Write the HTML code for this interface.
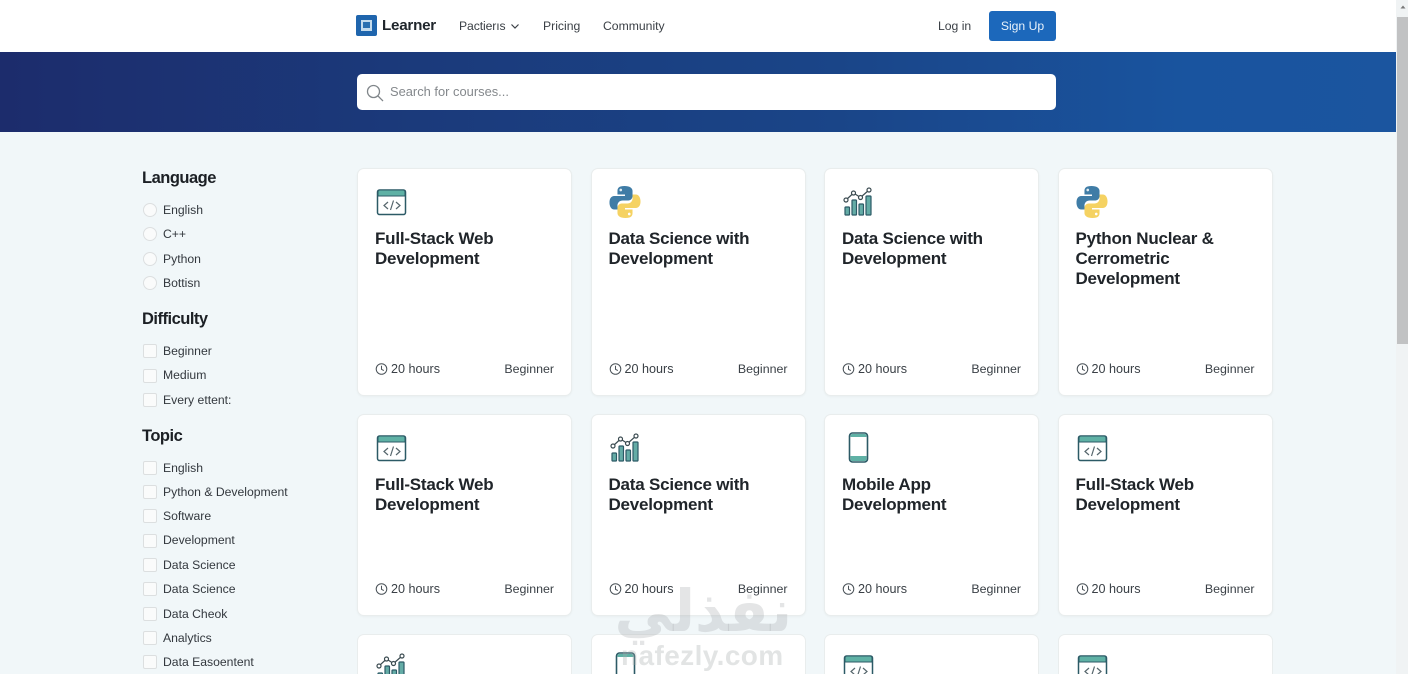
<!DOCTYPE html>
<html style="width:1408px;height:674px;overflow:hidden"><head><meta charset="utf-8"><style>
html,body{margin:0;padding:0}
body{width:1408px;height:674px;overflow:hidden;background:#f1f7f9;font-family:"Liberation Sans",sans-serif;color:#2a3036}
#w{position:relative;width:1408px;height:674px;overflow:hidden;background:#f1f7f9}
.a{position:absolute;white-space:nowrap}
.top{left:0;top:0;width:1396px;height:52px;background:#fff}
.hero{left:0;top:52px;width:1396px;height:80px;background:linear-gradient(90deg,#1c2c6c 0%,#1b3a7b 30%,#1a4588 60%,#19549f 85%,#1b559f 100%)}
.nav{font-size:12.2px;color:#3b4046;top:18px;line-height:17px}
.search{left:357px;top:74px;width:699px;height:36px;background:#fff;border-radius:5px}
.sb{left:1396px;top:0;width:12px;height:674px;background:#f0f3f4}
.th{left:1397px;top:17px;width:11px;height:327px;background:#c1c2c3}
h3{position:absolute;margin:0;left:142px;font-size:16.5px;font-weight:700;letter-spacing:-.5px;color:#1c2025;line-height:22px}
.l{position:absolute;left:163px;font-size:12.2px;color:#33383e;line-height:16px;white-space:nowrap}
.r,.c{position:absolute;left:143px;width:12px;height:12px;background:#fafbfb;border:1px solid #dcdfe0}
.r{border-radius:50%}.c{border-radius:2px}
.card{position:absolute;width:215px;background:#fff;border:1px solid #e9eded;border-radius:7px;box-sizing:border-box;box-shadow:0 1px 2px rgba(0,0,0,.04)}
.last{height:40px;top:634px;border-bottom:0;border-radius:7px 7px 0 0;box-shadow:none;overflow:hidden}
.t{position:absolute;left:17px;top:60px;font-size:17px;font-weight:700;color:#20252a;line-height:20px;letter-spacing:-.22px;white-space:nowrap}
.h{position:absolute;left:33px;font-size:12.6px;color:#3a4046;line-height:17px;white-space:nowrap}
.b{position:absolute;right:17px;font-size:12.4px;color:#3a4046;line-height:17px}
.k{position:absolute;left:17px;width:13px;height:14px}
.i{position:absolute;width:34px;height:34px;left:17px;top:16px}
.p{width:32px}
</style></head><body><div id="w">
<svg width="0" height="0" style="position:absolute">
<defs>
<symbol id="code" viewBox="0 0 34 34"><rect x="2.5" y="5" width="28" height="24.5" rx="2" fill="#fff" stroke="#2c5a66" stroke-width="1.5"/><path d="M3 7a2 2 0 0 1 2-2h23a2 2 0 0 1 2 2v4H3z" fill="#5fb1a5" stroke="#2c5a66" stroke-width="1"/><path d="M13 17l-4 3.500 4 3.500M21 17l4 3.500-4 3.500M18.500 15.500l-3 9.500" fill="none" stroke="#56666c" stroke-width="1.200"/></symbol>
<symbol id="py" viewBox="0 0 34 34"><path d="M16.500 1c-6 0-7.500 2-7.500 5v3.500h8V11H5.500C2.500 11 .5 13.500.5 17.500S2.500 24.500 5.500 24.500H9v-4c0-3 2.500-5 5.500-5h6c2.500 0 4.500-2 4.500-4.500V6c0-3-3-5-8.500-5z" fill="#3f7ca6"/><path d="M17.500 33c6 0 7.500-2 7.500-5v-3.500h-8V23h11.500c3 0 5-2.500 5-6.500S31.500 9.500 28.500 9.500H25v4c0 3-2.500 5-5.500 5h-6C11 18.500 9 20.500 9 23v5c0 3 3 5 8.500 5z" fill="#f5d262"/><circle cx="12.500" cy="5" r="1.400" fill="#dfeaf0"/><circle cx="21.500" cy="29" r="1.400" fill="#fff"/></symbol>
<symbol id="chart" viewBox="0 0 34 34"><g fill="#64aca6" stroke="#2c5a66" stroke-width="1.200"><rect x="3" y="22" width="4.500" height="8" rx=".8"/><rect x="10" y="15" width="4.500" height="15" rx=".8"/><rect x="17" y="19" width="4.500" height="11" rx=".8"/><rect x="24" y="11" width="5" height="19" rx=".8"/></g><path d="M4.500 14.500L11.500 8 18.500 12.500 27 5" fill="none" stroke="#3a4a50" stroke-width="1.200"/><g fill="#fff" stroke="#3a4a50" stroke-width="1.200"><circle cx="4" cy="15" r="2"/><circle cx="11.500" cy="8" r="2"/><circle cx="18.500" cy="12.500" r="2"/><circle cx="27" cy="5" r="2"/></g></symbol>
<symbol id="phone" viewBox="0 0 34 34"><rect x="7.500" y="2" width="18" height="29" rx="3" fill="#fff" stroke="#2c5a66" stroke-width="1.600"/><path d="M8.500 6V5a2 2 0 0 1 2-2h12a2 2 0 0 1 2 2v1zM8.500 25h16v3a2 2 0 0 1-2 2h-12a2 2 0 0 1-2-2z" fill="#5fb1a5"/></symbol>
<symbol id="clk" viewBox="0 0 14 14"><circle cx="7" cy="7" r="5.700" fill="none" stroke="#4a5258" stroke-width="1.100"/><path d="M7 3.500V7.300L9.500 8.700" fill="none" stroke="#4a5258" stroke-width="1.100"/></symbol>
</defs></svg>

<div class="a top"></div>
<div class="a hero"></div>
<svg class="a" style="left:356px;top:15px" width="21" height="21" viewBox="0 0 21 21"><rect width="21" height="21" rx="2" fill="#1f65ad"/><rect x="5" y="5" width="11" height="11" fill="#c4dbec"/><rect x="7" y="7" width="7" height="6" fill="#2b70b0"/></svg>
<div class="a" style="left:382px;top:15px;font-size:15.2px;letter-spacing:-.25px;font-weight:700;color:#20262c;line-height:21px">Learner</div>
<div class="a nav" style="left:459px;letter-spacing:-.1px">Pactierıs</div>
<svg class="a" style="left:510px;top:23px" width="10" height="7" viewBox="0 0 10 7"><path d="M1.500 1.500L5 5 8.500 1.500" fill="none" stroke="#3b4046" stroke-width="1.200"/></svg>
<div class="a nav" style="left:543px">Pricing</div>
<div class="a nav" style="left:603px">Community</div>
<div class="a nav" style="left:938px">Log in</div>
<div class="a" style="left:989px;top:11px;width:67px;height:30px;background:#1c68bb;border-radius:3px;color:#e8f2fb;font-size:12.2px;line-height:30px;text-align:center">Sign Up</div>
<div class="a search"></div>
<svg class="a" style="left:366px;top:84px" width="18" height="18" viewBox="0 0 18 18"><circle cx="7.500" cy="7.500" r="6" fill="none" stroke="#80868a" stroke-width="1.300"/><path d="M12 12l5 5" stroke="#80868a" stroke-width="1.300"/></svg>
<div class="a" style="left:390px;top:83px;font-size:12.9px;color:#84888c;line-height:18px">Search for courses...</div>
<div class="a sb"></div><div class="a th"></div>
<svg class="a" style="left:1399px;top:4px" width="8" height="6" viewBox="0 0 8 6"><path d="M4 1.500L6.500 4.500H1.500z" fill="#777"/></svg>

<h3 style="top:167px">Language</h3>
<i class="r" style="top:203px"></i><div class="l" style="top:202px">English</div>
<i class="r" style="top:227px"></i><div class="l" style="top:226px">C++</div>
<i class="r" style="top:252px"></i><div class="l" style="top:251px">Python</div>
<i class="r" style="top:276px"></i><div class="l" style="top:275px">Bottisn</div>
<h3 style="top:308px">Difficulty</h3>
<i class="c" style="top:344px"></i><div class="l" style="top:343px">Beginner</div>
<i class="c" style="top:369px"></i><div class="l" style="top:367px">Medium</div>
<i class="c" style="top:393px"></i><div class="l" style="top:392px">Every ettent:</div>
<h3 style="top:425px">Topic</h3>
<i class="c" style="top:461px"></i><div class="l" style="top:460px">English</div>
<i class="c" style="top:485px"></i><div class="l" style="top:484px">Python &amp; Development</div>
<i class="c" style="top:509px"></i><div class="l" style="top:508px">Software</div>
<i class="c" style="top:534px"></i><div class="l" style="top:532px">Development</div>
<i class="c" style="top:558px"></i><div class="l" style="top:557px">Data Science</div>
<i class="c" style="top:582px"></i><div class="l" style="top:581px">Data Science</div>
<i class="c" style="top:607px"></i><div class="l" style="top:606px">Data Cheok</div>
<i class="c" style="top:631px"></i><div class="l" style="top:630px">Analytics</div>
<i class="c" style="top:655px"></i><div class="l" style="top:654px">Data Easoentent</div>

<div class="card" style="left:357px;top:168px;height:228px"><svg class="i"><use href="#code"/></svg><div class="t">Full-Stack Web<br>Development</div><svg class="k" style="top:193px"><use href="#clk"/></svg><div class="h" style="top:192px">20 hours</div><div class="b" style="top:192px">Beginner</div></div>
<div class="card" style="left:590.500px;top:168px;height:228px"><svg class="i p" viewBox="0 0 34 34" preserveAspectRatio="none"><use href="#py" width="34" height="34"/></svg><div class="t">Data Science with<br>Development</div><svg class="k" style="top:193px"><use href="#clk"/></svg><div class="h" style="top:192px">20 hours</div><div class="b" style="top:192px">Beginner</div></div>
<div class="card" style="left:824px;top:168px;height:228px"><svg class="i"><use href="#chart"/></svg><div class="t">Data Science with<br>Development</div><svg class="k" style="top:193px"><use href="#clk"/></svg><div class="h" style="top:192px">20 hours</div><div class="b" style="top:192px">Beginner</div></div>
<div class="card" style="left:1057.500px;top:168px;height:228px"><svg class="i p" viewBox="0 0 34 34" preserveAspectRatio="none"><use href="#py" width="34" height="34"/></svg><div class="t">Python Nuclear &amp;<br>Cerrometric<br>Development</div><svg class="k" style="top:193px"><use href="#clk"/></svg><div class="h" style="top:192px">20 hours</div><div class="b" style="top:192px">Beginner</div></div>

<div class="card" style="left:357px;top:414px;height:202px"><svg class="i"><use href="#code"/></svg><div class="t">Full-Stack Web<br>Development</div><svg class="k" style="top:167px"><use href="#clk"/></svg><div class="h" style="top:166px">20 hours</div><div class="b" style="top:166px">Beginner</div></div>
<div class="card" style="left:590.500px;top:414px;height:202px"><svg class="i"><use href="#chart"/></svg><div class="t">Data Science with<br>Development</div><svg class="k" style="top:167px"><use href="#clk"/></svg><div class="h" style="top:166px">20 hours</div><div class="b" style="top:166px">Beginner</div></div>
<div class="card" style="left:824px;top:414px;height:202px"><svg class="i"><use href="#phone"/></svg><div class="t">Mobile App<br>Development</div><svg class="k" style="top:167px"><use href="#clk"/></svg><div class="h" style="top:166px">20 hours</div><div class="b" style="top:166px">Beginner</div></div>
<div class="card" style="left:1057.500px;top:414px;height:202px"><svg class="i"><use href="#code"/></svg><div class="t">Full-Stack Web<br>Development</div><svg class="k" style="top:167px"><use href="#clk"/></svg><div class="h" style="top:166px">20 hours</div><div class="b" style="top:166px">Beginner</div></div>

<div class="card last" style="left:357px"><svg class="i" style="height:23px" viewBox="0 0 34 23" preserveAspectRatio="xMinYMin slice"><use href="#chart" width="34" height="34"/></svg></div>
<div class="card last" style="left:590.500px"><svg class="i" style="height:23px" viewBox="0 0 34 23" preserveAspectRatio="xMinYMin slice"><use href="#phone" width="34" height="34"/></svg></div>
<div class="card last" style="left:824px"><svg class="i" style="height:23px" viewBox="0 0 34 23" preserveAspectRatio="xMinYMin slice"><use href="#code" width="34" height="34"/></svg></div>
<div class="card last" style="left:1057.500px"><svg class="i" style="height:23px" viewBox="0 0 34 23" preserveAspectRatio="xMinYMin slice"><use href="#code" width="34" height="34"/></svg></div>

<div class="a" dir="rtl" style="left:620px;top:571px;width:172px;height:80px;text-align:center;font-family:'DejaVu Sans',sans-serif;font-weight:700;font-size:58px;line-height:80px;color:rgba(165,170,172,.3)">نفذلي</div>
<div class="a" style="left:621px;top:638px;font-size:28px;font-weight:700;line-height:36px;letter-spacing:.4px;color:rgba(165,170,172,.32)">nafezly.com</div>
</div></body></html>
